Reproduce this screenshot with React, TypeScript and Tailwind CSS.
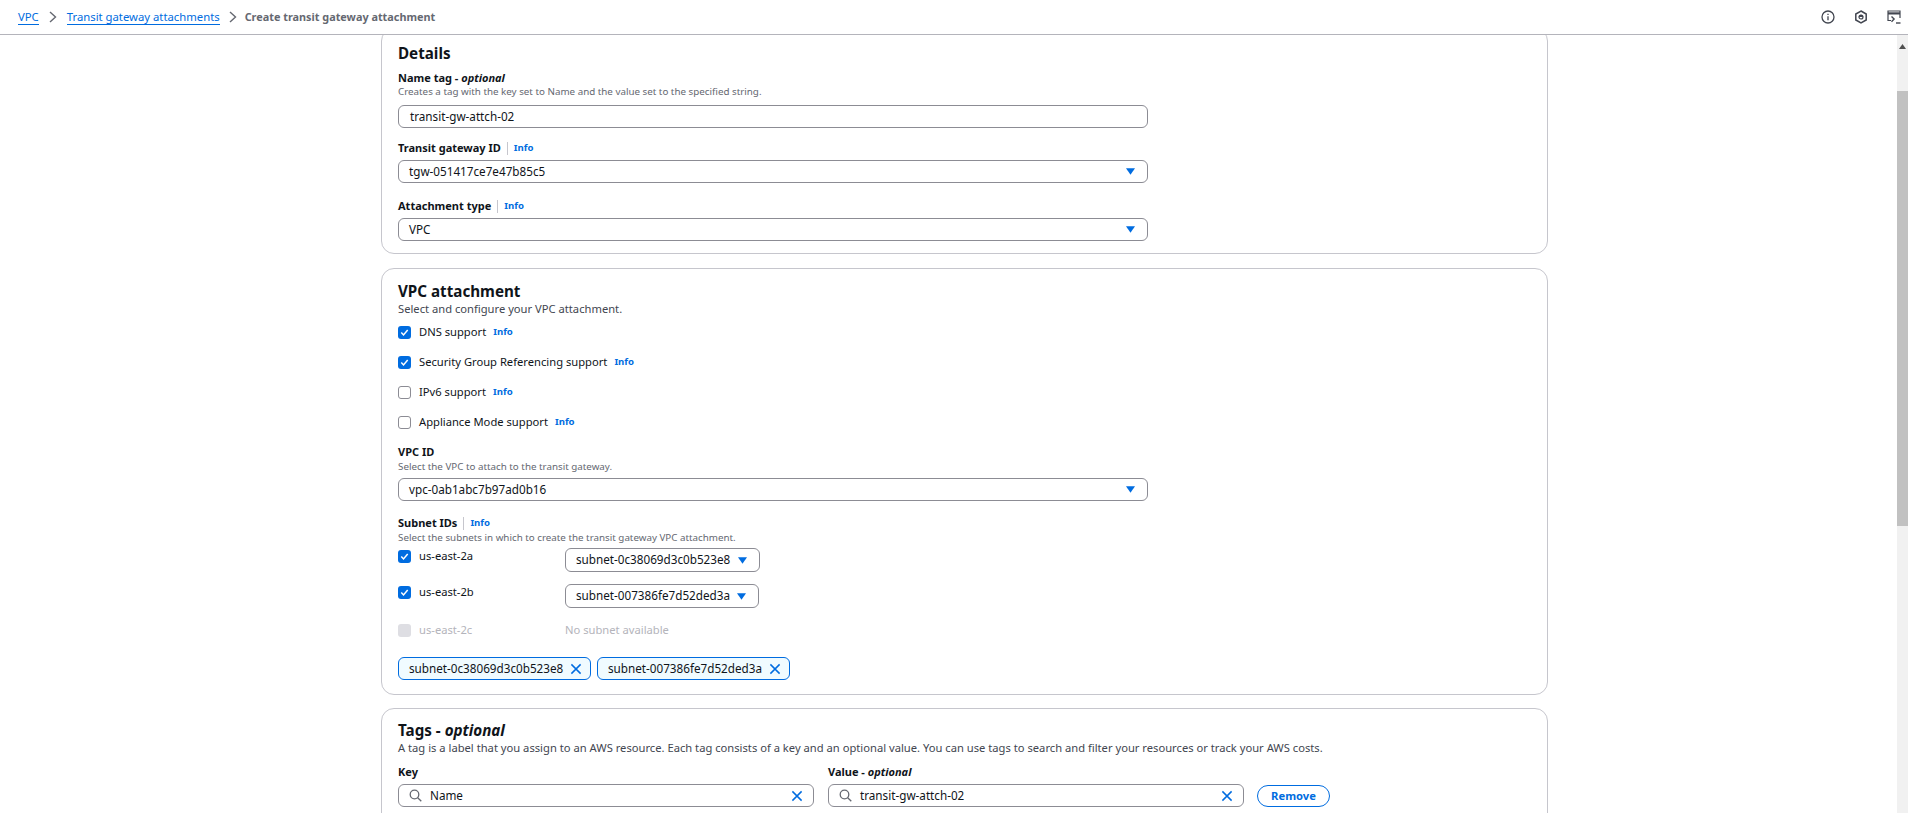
import React from "react";

const ChevronSep = () => (
  <svg width="10" height="14" viewBox="0 0 10 14" fill="none" stroke="#656871" strokeWidth="1.4" className="shrink-0">
    <path d="M2 2l5.5 5L2 12" />
  </svg>
);

const Caret = () => (
  <svg width="9" height="7" viewBox="0 0 9 7" className="shrink-0">
    <path d="M0 0.3h9L4.5 6.7z" fill="#006ce0" />
  </svg>
);

const XIcon = ({ size = 13 }: { size?: number }) => (
  <svg width={size} height={size} viewBox="0 0 13 13" fill="none" stroke="#006ce0" strokeWidth="1.6" className="shrink-0">
    <path d="M1.5 1.5l10 10M11.5 1.5l-10 10" />
  </svg>
);

const Search = () => (
  <svg width="13" height="13" viewBox="0 0 13 13" fill="none" stroke="#656871" strokeWidth="1.3" className="shrink-0">
    <circle cx="5.5" cy="5.5" r="4.3" />
    <path d="M8.7 8.7l3.6 3.6" />
  </svg>
);

const Check = ({ state }: { state: "on" | "off" | "disabled" }) => {
  if (state === "on")
    return (
      <span className="flex h-[13px] w-[13px] shrink-0 items-center justify-center rounded-[3px] bg-[#006ce0]">
        <svg width="9" height="9" viewBox="0 0 9 9" fill="none" stroke="#fff" strokeWidth="1.5">
          <path d="M1.3 4.6l2.2 2.3 4.2-5" />
        </svg>
      </span>
    );
  if (state === "disabled")
    return <span className="h-[13px] w-[13px] shrink-0 rounded-[3px] bg-[#dedee3]" />;
  return <span className="h-[13px] w-[13px] shrink-0 rounded-[3px] border border-[#8c8c94] bg-white" />;
};

const Info = () => <span className="text-[9.6px] font-bold leading-[14px] text-[#006ce0]">Info</span>;

const Label = ({ children, info, className = "" }: { children: React.ReactNode; info?: boolean; className?: string }) => (
  <div className={`flex h-[14px] items-center text-[11px] font-bold leading-[14px] text-[#0f141a] ${className}`}>
    {children}
    {info && (
      <>
        <span className="mx-[6px] h-[13px] w-px bg-[#c6c6cd]" />
        <Info />
      </>
    )}
  </div>
);

const Desc = ({ children, className = "" }: { children: React.ReactNode; className?: string }) => (
  <div className={`h-[14px] text-[9.8px] leading-[14px] text-[#656871] ${className}`}>{children}</div>
);

const Select = ({ value, className = "" }: { value: string; className?: string }) => (
  <div className={`flex h-[23px] w-[750px] items-center justify-between rounded-[6px] border border-[#8c8c94] bg-white pl-[10px] pr-[12px] text-[11.7px] text-[#0f141a] ${className}`}>
    <span>{value}</span>
    <Caret />
  </div>
);

const CheckRow = ({ state, label, className = "" }: { state: "on" | "off"; label: string; className?: string }) => (
  <div className={`flex h-[14px] items-center ${className}`}>
    <Check state={state} />
    <span className="ml-[8px] mr-[7px] text-[11.2px] leading-[14px] text-[#0f141a]">{label}</span>
    <Info />
  </div>
);

const SubnetRow = ({ name, subnet, className = "", w }: { name: string; subnet: string; className?: string; w: string }) => (
  <div className={`flex items-start ${className}`}>
    <div className="flex w-[167px] items-center pt-[1px]">
      <Check state="on" />
      <span className="ml-[8px] text-[11.2px] leading-[14px] text-[#0f141a]">{name}</span>
    </div>
    <div className={`flex h-[24px] items-center justify-between rounded-[6px] border border-[#8c8c94] bg-white pl-[10px] pr-[12px] text-[11.7px] text-[#0f141a] ${w}`}>
      <span>{subnet}</span>
      <Caret />
    </div>
  </div>
);

const Token = ({ value, w }: { value: string; w: string }) => (
  <div className={`flex h-[23px] items-center justify-between rounded-[6px] border border-[#006ce0] bg-[#f0fbff] pl-[10px] pr-[8px] text-[11.7px] text-[#0f141a] ${w}`}>
    <span>{value}</span>
    <XIcon size={12} />
  </div>
);

const SearchInput = ({ value, className = "" }: { value: string; className?: string }) => (
  <div className={`flex h-[23px] items-center rounded-[6px] border border-[#8c8c94] bg-white pl-[10px] pr-[10px] text-[11.7px] text-[#0f141a] ${className}`}>
    <Search />
    <span className="ml-[8px] flex-1">{value}</span>
    <XIcon size={12} />
  </div>
);

const Card = ({ children, className = "" }: { children: React.ReactNode; className?: string }) => (
  <section className={`rounded-[13px] border border-[#c6c6cd] bg-white pl-[16px] ${className}`}>{children}</section>
);

export default function App() {
  return (
    <div className="flex h-[813px] w-full flex-col overflow-hidden bg-white font-['Noto_Sans',sans-serif]">
      <header className="flex h-[35px] shrink-0 items-center justify-between border-b border-[#b4b4bb] bg-white pl-[18px] pr-[7px]">
        <nav className="flex items-center text-[11.3px]">
          <span className="border-b border-[#006ce0] leading-[14px] text-[#006ce0]">VPC</span>
          <span className="ml-[9px] mr-[9px]"><ChevronSep /></span>
          <span className="border-b border-[#006ce0] leading-[14px] text-[#006ce0]">Transit gateway attachments</span>
          <span className="ml-[8px] mr-[7px]"><ChevronSep /></span>
          <span className="text-[10.85px] font-bold leading-[14px] text-[#656871]">Create transit gateway attachment</span>
        </nav>
        <div className="flex items-center gap-[19px]">
          <svg width="14" height="14" viewBox="0 0 14 14" fill="none" stroke="#424650" strokeWidth="1.3">
            <circle cx="7" cy="7" r="6" />
            <path d="M7 6.2v4M7 3.8v1.3" />
          </svg>
          <svg width="14" height="14" viewBox="0 0 14 14" fill="none" stroke="#424650" strokeWidth="1.5">
            <path d="M7 1l5.2 3v6L7 13l-5.2-3V4z" />
            <path d="M4.8 7a2.2 2.2 0 0 1 4.4 0z" fill="#424650" stroke="none" />
            <circle cx="7" cy="7" r="2" strokeWidth="1.2" />
          </svg>
          <svg width="14" height="14" viewBox="0 0 14 14" fill="none" stroke="#424650" strokeWidth="1.2">
            <path d="M4 10.5H1V1h12v7" />
            <path d="M1 3.4h12" strokeWidth="2.2" />
            <path d="M4.5 6.5l2.6 2.6-2.6 2.6" strokeWidth="1.4" />
            <path d="M9 13h4.5" strokeWidth="1.4" />
          </svg>
        </div>
      </header>

      <div className="flex min-h-0 flex-1">
        <main className="min-w-0 flex-1 overflow-hidden">
          <div className="ml-[381px] w-[1167px]">
            <Card className="-mt-[7px] pb-[12px] pt-[15px]">
              <h2 className="h-[18px] text-[15.2px] font-bold leading-[18px] text-[#0f141a]">Details</h2>
              <Label className="mt-[9px]">
                Name tag -&nbsp;<em className="font-bold italic">optional</em>
              </Label>
              <Desc>Creates a tag with the key set to Name and the value set to the specified string.</Desc>
              <div className="mt-[6px] flex h-[23px] w-[750px] items-center rounded-[6px] border border-[#8c8c94] bg-white pl-[11px] text-[11.7px] text-[#0f141a]">
                transit-gw-attch-02
              </div>
              <Label info className="mt-[13px]">Transit gateway ID</Label>
              <Select value="tgw-051417ce7e47b85c5" className="mt-[5px]" />
              <Label info className="mt-[16px]">Attachment type</Label>
              <Select value="VPC" className="mt-[5px]" />
            </Card>

            <Card className="mt-[14px] pb-[14px] pt-[13px]">
              <h2 className="h-[18px] text-[15.2px] font-bold leading-[18px] text-[#0f141a]">VPC attachment</h2>
              <div className="mt-[2px] h-[14px] text-[11.2px] leading-[14px] text-[#424650]">Select and configure your VPC attachment.</div>
              <CheckRow state="on" label="DNS support" className="mt-[9px]" />
              <CheckRow state="on" label="Security Group Referencing support" className="mt-[16px]" />
              <CheckRow state="off" label="IPv6 support" className="mt-[16px]" />
              <CheckRow state="off" label="Appliance Mode support" className="mt-[16px]" />
              <Label className="mt-[16px]">VPC ID</Label>
              <Desc className="mt-px">Select the VPC to attach to the transit gateway.</Desc>
              <Select value="vpc-0ab1abc7b97ad0b16" className="mt-[4px]" />
              <Label info className="mt-[15px]">Subnet IDs</Label>
              <Desc className="mt-px">Select the subnets in which to create the transit gateway VPC attachment.</Desc>
              <SubnetRow name="us-east-2a" subnet="subnet-0c38069d3c0b523e8" w="w-[195px]" className="mt-[3px]" />
              <SubnetRow name="us-east-2b" subnet="subnet-007386fe7d52ded3a" w="w-[194px]" className="mt-[12px]" />
              <div className="mt-[15px] flex h-[14px] items-center">
                <div className="flex w-[167px] items-center">
                  <Check state="disabled" />
                  <span className="ml-[8px] text-[11.2px] leading-[14px] text-[#b4b4bb]">us-east-2c</span>
                </div>
                <span className="text-[11.2px] leading-[14px] text-[#b4b4bb]">No subnet available</span>
              </div>
              <div className="mt-[20px] flex gap-[6px]">
                <Token value="subnet-0c38069d3c0b523e8" w="w-[193px]" />
                <Token value="subnet-007386fe7d52ded3a" w="w-[193px]" />
              </div>
            </Card>

            <Card className="mt-[13px] pb-[20px] pt-[12px]">
              <h2 className="h-[18px] text-[15.2px] font-bold leading-[18px] text-[#0f141a]">
                Tags - <em className="font-bold italic">optional</em>
              </h2>
              <div className="mt-[2px] h-[14px] text-[11.2px] leading-[14px] text-[#424650]">
                A tag is a label that you assign to an AWS resource. Each tag consists of a key and an optional value. You can use tags to search and filter your resources or track your AWS costs.
              </div>
              <div className="mt-[10px] flex items-end">
                <div className="w-[416px]">
                  <Label>Key</Label>
                  <SearchInput value="Name" className="mt-[5px]" />
                </div>
                <div className="ml-[14px] w-[416px]">
                  <Label>
                    Value -&nbsp;<em className="font-bold italic">optional</em>
                  </Label>
                  <SearchInput value="transit-gw-attch-02" className="mt-[5px]" />
                </div>
                <button className="ml-[13px] flex h-[22px] w-[73px] items-center justify-center rounded-full border border-[#006ce0] bg-white text-[11.2px] font-bold text-[#006ce0]">
                  Remove
                </button>
              </div>
            </Card>
          </div>
        </main>
        <aside className="flex w-[11px] shrink-0 flex-col items-center bg-[#f1f1f1]">
          <svg width="7" height="5" viewBox="0 0 7 5" className="mt-[9px]">
            <path d="M3.5 0L7 5H0z" fill="#505050" />
          </svg>
          <div className="mt-[42px] h-[435px] w-full bg-[#c1c1c1]" />
        </aside>
      </div>
    </div>
  );
}
